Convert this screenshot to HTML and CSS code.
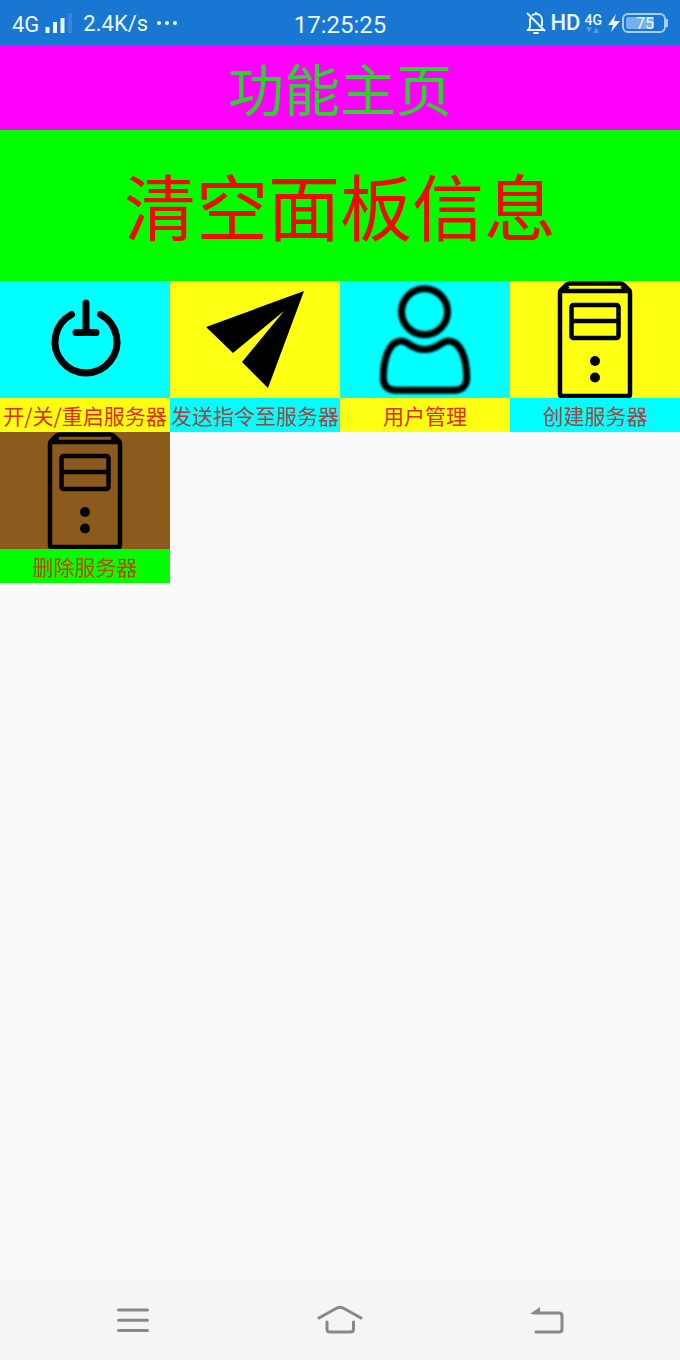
FILE: index.html
```
<!DOCTYPE html>
<html lang="zh-CN">
<head>
  <meta charset="UTF-8">
  <meta name="viewport" content="width=device-width, initial-scale=1.0">
  <title>功能主页</title>
  <link rel="stylesheet" href="styles.css">
</head>
<body>
  <div class="status-bar">
    <div class="status-left">
      <span class="network">4G</span>
      <svg class="signal" width="28" height="22" viewBox="0 0 28 22">
        <path d="M2.5 15v6M10 10v11M17.5 6v15" stroke="#e8f8ff" stroke-width="4"/>
        <path d="M25 1v20" stroke="#3585d8" stroke-width="4"/>
      </svg>
      <span class="speed">2.4K/s</span>
      <svg class="dots" width="22" height="6" viewBox="0 0 22 6" fill="#e8f8ff">
        <circle cx="3" cy="3" r="2"/><circle cx="11" cy="3" r="2"/><circle cx="19" cy="3" r="2"/>
      </svg>
    </div>
    <div class="clock">17:25:25</div>
    <div class="status-right">
      <svg width="20" height="24" viewBox="0 0 20 24" fill="none" stroke="#e8f8ff" stroke-width="2">
        <path d="M6 4.500C7 3.500 8 3 10 3c4 0 6 3 6 6v6M4 7v9l-2 3h15M10 1v2M1 2l18 18"/>
        <path d="M7.500 22h5"/>
      </svg>
      <span class="hd">HD</span>
      <span class="data">
        <span>4G</span>
        <svg width="14" height="6" viewBox="0 0 14 6" fill="#4f9ae2">
          <path d="M0 0h6L3 6zM7 6h6L10 0z"/>
        </svg>
      </span>
      <svg class="bolt" width="12" height="20" viewBox="0 0 12 20">
        <path d="M8 1L0 12h5l-2 7 9-11H6z" fill="#e8f8ff"/>
      </svg>
      <span class="battery"><span>75</span></span>
    </div>
  </div>

  <h1>功能主页</h1>
  <button class="clear-button">清空面板信息</button>

  <div class="menu">
    <button class="item cyan-yellow">
      <svg viewBox="0 0 170 117" fill="none" stroke="#000" stroke-width="7" stroke-linecap="round">
        <path d="M71.500 33.500A31 31 0 1 0 100.500 33.500M86 22v29M76 51.500h20"/>
      </svg>
      <span>开/关/重启服务器</span>
    </button>
    <button class="item yellow-cyan">
      <svg viewBox="0 0 170 117">
        <path d="M134 10L36 46l27 26 51-42-42 51 26 26z"/>
      </svg>
      <span>发送指令至服务器</span>
    </button>
    <button class="item cyan-yellow">
      <svg class="soft" viewBox="0 0 170 117" fill="none" stroke="#000" stroke-width="7">
        <circle cx="84.500" cy="30.700" r="23"/>
        <path d="M61.500 60C68 60 71 68.500 84.500 68.500S101 60 108 60c12 0 18.700 16 18.700 37 0 8-5 12.300-12.700 12.300H56c-8 0-12.700-4.300-12.700-12.300C43.300 76 50 60 61.500 60z"/>
      </svg>
      <span>用户管理</span>
    </button>
    <button class="item yellow-cyan">
      <svg viewBox="0 0 170 117" fill="none" stroke="#000" stroke-width="4.500" stroke-linejoin="round">
        <rect x="50" y="10" width="70" height="105" rx="1.500"/>
        <path d="M50 10l6-6q2-1.500 4-1.500h50q2 0 4 1.500l6 6M55 8l3-3M115 8l-3-3"/>
        <rect x="61.500" y="24" width="47" height="33" rx="2"/>
        <path d="M61.500 40h47"/>
        <g fill="#000" stroke="none"><circle cx="85" cy="80" r="5"/><circle cx="85" cy="96.500" r="5"/></g>
      </svg>
      <span>创建服务器</span>
    </button>
    <button class="item brown-green">
      <svg viewBox="0 0 170 117" fill="none" stroke="#000" stroke-width="4.500" stroke-linejoin="round">
        <rect x="50" y="10" width="70" height="105" rx="1.500"/>
        <path d="M50 10l6-6q2-1.500 4-1.500h50q2 0 4 1.500l6 6M55 8l3-3M115 8l-3-3"/>
        <rect x="61.500" y="24" width="47" height="33" rx="2"/>
        <path d="M61.500 40h47"/>
        <g fill="#000" stroke="none"><circle cx="85" cy="80" r="5"/><circle cx="85" cy="96.500" r="5"/></g>
      </svg>
      <span>删除服务器</span>
    </button>
  </div>

  <nav class="nav-bar">
    <button aria-label="菜单">
      <svg width="32" height="24" viewBox="0 0 32 24">
        <path d="M1.500 2h29M1.500 12.200h29M1.500 22.500h29"/>
      </svg>
    </button>
    <button aria-label="主页">
      <svg width="46" height="30" viewBox="0 0 46 30">
        <path d="M2 13L19 3.500q4-2.500 8 0L44 13M10 17v7q0 3 3 3h20.500q3 0 3-3v-7"/>
      </svg>
    </button>
    <button aria-label="返回">
      <svg width="34" height="28" viewBox="0 0 34 28">
        <path d="M4 7h25q3 0 3 3v13q0 3-3 3H6"/>
        <path class="arrow" d="M0 8l10-7v7z"/>
      </svg>
    </button>
  </nav>
</body>
</html>
```
FILE: styles.css
```
* {
  box-sizing: border-box;
}

body {
  margin: 0;
  min-height: 100vh;
  display: flex;
  flex-direction: column;
  background-color: #fafafa;
  font-family: 'Noto Sans CJK SC', sans-serif;
}

button {
  border: none;
  padding: 0;
  background: none;
  font-family: inherit;
  cursor: pointer;
}

svg {
  display: block;
}

.status-bar {
  display: grid;
  grid-template-columns: 1fr auto 1fr;
  align-items: center;
  height: 45px;
  padding: 0 12px;
  background-color: #1976d2;
  color: #e8f8ff;
  font-family: Roboto, sans-serif;
  font-size: 22px;
}

.status-left, .status-right {
  display: flex;
  align-items: center;
}

.status-right {
  justify-content: flex-end;
  padding-right: 2px;
}

.network {
  padding-top: 4px;
}

.signal {
  margin-left: 6px;
}

.speed {
  margin-left: 10px;
  padding-top: 2px;
}

.dots {
  margin-left: 8px;
}

.clock {
  font-size: 24px;
  padding-top: 4px;
}

.hd {
  margin-left: 5px;
  font-weight: 500;
}

.data {
  margin-left: 4px;
  font-size: 14px;
  font-weight: 500;
  line-height: 14px;
}

.data svg {
  margin: 0 auto;
}

.bolt {
  margin-left: 6px;
}

.battery {
  position: relative;
  width: 44px;
  height: 20px;
  margin-left: 2px;
  padding: 2px;
  border: 2px solid #a5d0f5;
  border-radius: 6px;
}

.battery::after {
  content: "";
  position: absolute;
  top: 4px;
  right: -4px;
  width: 2px;
  height: 8px;
  background-color: #a5d0f5;
}

.battery span {
  display: block;
  width: 28px;
  height: 12px;
  padding-left: 10px;
  border-radius: 2px;
  background-color: #75b0e8;
  font-size: 16px;
  line-height: 13px;
}

h1 {
  margin: 0;
  height: 85px;
  background-color: #ff00ff;
  color: #2bd42b;
  font-size: 56px;
  font-weight: 400;
  line-height: 84px;
  text-align: center;
}

.clear-button {
  height: 151px;
  padding-bottom: 4px;
  background-color: #00ff00;
  color: #ee0c00;
  font-size: 72px;
  line-height: 147px;
}

.menu {
  display: grid;
  grid-template-columns: repeat(4, 1fr);
  flex: 1;
  align-content: start;
}

.item svg {
  width: 100%;
  height: 117px;
}

.item span {
  display: block;
  height: 34px;
  font-size: 21px;
  line-height: 34px;
  white-space: nowrap;
}

.soft {
  filter: blur(1px);
}

.cyan-yellow {
  background-color: #00ffff;
}

.cyan-yellow span {
  background-color: #ffff14;
  color: #e02c0c;
}

.yellow-cyan {
  background-color: #ffff14;
}

.yellow-cyan span {
  background-color: #00ffff;
  color: #a04444;
}

.brown-green {
  background-color: #8d5a1e;
}

.brown-green span {
  background-color: #00ff00;
  color: #b84c00;
}

.nav-bar {
  display: grid;
  grid-template-columns: repeat(3, 1fr);
  height: 80px;
  padding: 0 30px;
  background-color: #f5f5f5;
}

.nav-bar button {
  display: flex;
  align-items: center;
  justify-content: center;
}

.nav-bar path {
  fill: none;
  stroke: #888;
  stroke-width: 3;
  stroke-linecap: round;
}

.nav-bar .arrow {
  fill: #888;
  stroke: none;
}
```
